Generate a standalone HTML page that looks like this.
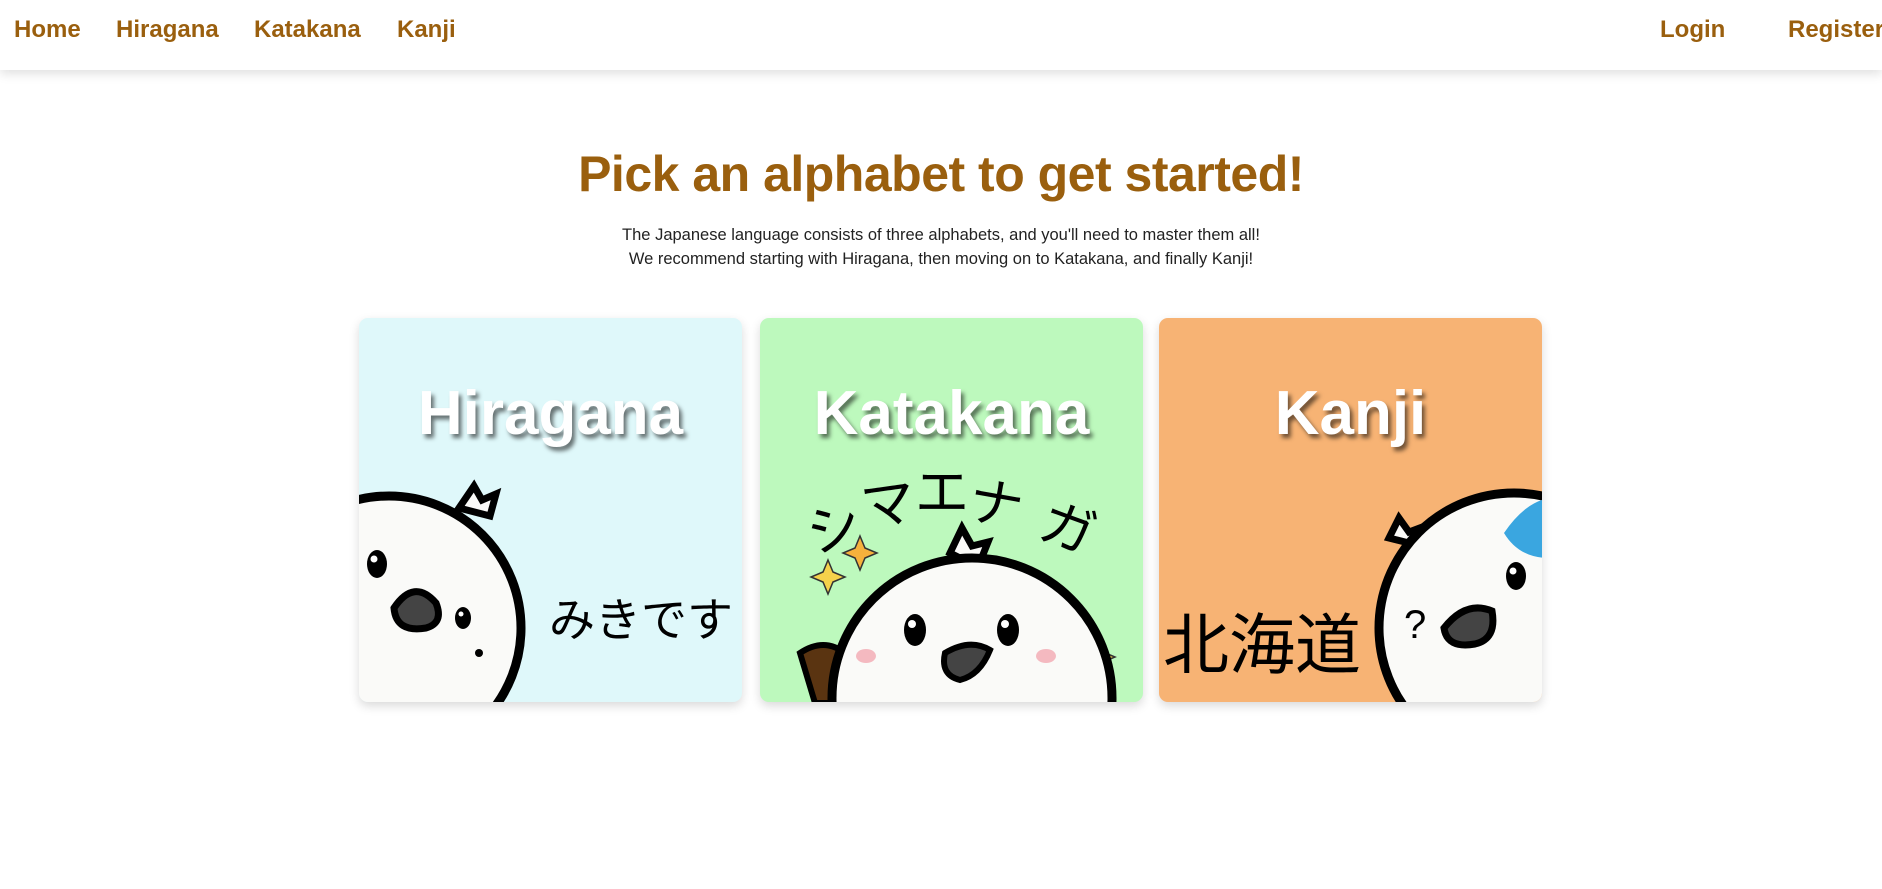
<!DOCTYPE html>
<html><head><meta charset="utf-8"><style>
*{margin:0;padding:0;box-sizing:border-box}
body{width:1882px;height:889px;background:#fff;font-family:"Liberation Sans","Noto Sans CJK JP",sans-serif;overflow:hidden;position:relative}
nav{position:absolute;left:0;top:0;width:1882px;height:70px;background:#fff;box-shadow:0 4px 10px rgba(0,0,0,.12);z-index:2}
nav a{position:absolute;top:16px;font-size:24px;font-weight:bold;color:#9a5f0e;text-decoration:none;white-space:nowrap}
h1{position:absolute;top:145px;width:100%;text-align:center;font-size:50px;color:#9a5f0e;font-weight:bold;letter-spacing:-0.5px}
.sub{position:absolute;top:223px;width:100%;text-align:center;font-size:16.5px;line-height:24px;color:#222}
.card{position:absolute;top:318px;width:383px;height:384px;border-radius:9px;overflow:hidden;box-shadow:0 4px 10px rgba(0,0,0,.15)}
.card svg{position:absolute;left:0;top:0}
.t{position:absolute;top:60px;width:100%;text-align:center;font-size:62px;color:#fff;font-weight:bold;text-shadow:3px 4px 4px rgba(0,0,0,.55)}
</style></head><body>
<nav>
<a style="left:14px">Home</a><a style="left:116px">Hiragana</a><a style="left:254px">Katakana</a><a style="left:397px">Kanji</a>
<a style="left:1660px">Login</a><a style="left:1788px">Register</a>
</nav>
<h1>Pick an alphabet to get started!</h1>
<div class="sub">The Japanese language consists of three alphabets, and you'll need to master them all!<br>We recommend starting with Hiragana, then moving on to Katakana, and finally Kanji!</div>

<div class="card" style="left:359px;background:#dff8fa">
<svg width="383" height="384">
<path d="M100 190 l15 -22 l8 14 l14 -6 l-6 22z" fill="#fafaf8" stroke="#000" stroke-width="7"/>
<circle cx="30" cy="310" r="132" fill="#fafaf8" stroke="#000" stroke-width="9"/>
<ellipse cx="18" cy="246" rx="10" ry="14" fill="#000"/><circle cx="15" cy="241" r="3.5" fill="#fff"/>
<path d="M35 290 q20 -30 42 -5 q8 20 -10 25 q-30 5 -32 -20z" fill="#444" stroke="#000" stroke-width="7"/>
<ellipse cx="104" cy="300" rx="8" ry="11" fill="#000"/><circle cx="102" cy="296" r="2.5" fill="#fff"/>
<circle cx="120" cy="335" r="4" fill="#000"/>
<text x="190" y="318" font-size="46" font-family="Noto Sans CJK JP,sans-serif">みきです</text>
</svg>
<div class="t">Hiragana</div>
</div>

<div class="card" style="left:760px;background:#bdf9bd">
<svg width="383" height="384">
<g font-size="54" font-family="Noto Sans CJK JP,sans-serif">
<text x="47" y="229" transform="rotate(-18 74 210)">シ</text>
<text x="101" y="205" transform="rotate(-8 128 186)">マ</text>
<text x="155" y="193">エ</text>
<text x="209" y="205" transform="rotate(10 236 186)">ナ</text>
<text x="281" y="229" transform="rotate(20 308 210)">ガ</text>
</g>
<path d="M100 218 l5 12 l12 5 l-12 5 l-5 12 l-5 -12 l-12 -5 l12 -5z" fill="#f6b13c" stroke="#333" stroke-width="1.5"/>
<path d="M68 242 l5 12 l12 5 l-12 5 l-5 12 l-5 -12 l-12 -5 l12 -5z" fill="#f5d24b" stroke="#333" stroke-width="1.5"/>
<path d="M312 300 l5 12 l12 5 l-12 5 l-5 12 l-5 -12 l-12 -5 l12 -5z" fill="#f6b13c" stroke="#333" stroke-width="1.5"/>
<path d="M338 322 l5 12 l12 5 l-12 5 l-5 12 l-5 -12 l-12 -5 l12 -5z" fill="#f5d24b" stroke="#333" stroke-width="1.5"/>
<path d="M40 335 q30 -20 55 10 l-10 40 h-30z" fill="#5a3411" stroke="#000" stroke-width="6"/>
<path d="M190 235 l12 -25 l10 18 l16 -4 l-10 25z" fill="#fafaf8" stroke="#000" stroke-width="7"/>
<circle cx="212" cy="380" r="140" fill="#fafaf8" stroke="#000" stroke-width="9"/>
<ellipse cx="155" cy="312" rx="11" ry="16" fill="#000"/><circle cx="152" cy="306" r="4" fill="#fff"/>
<ellipse cx="248" cy="312" rx="11" ry="16" fill="#000"/><circle cx="245" cy="306" r="4" fill="#fff"/>
<path d="M185 335 q25 -15 45 -3 q-10 25 -30 30 q-20 -5 -15 -27z" fill="#444" stroke="#000" stroke-width="6"/>
<ellipse cx="106" cy="338" rx="10" ry="7" fill="#f4b9c0"/><ellipse cx="286" cy="338" rx="10" ry="7" fill="#f4b9c0"/>
</svg>
<div class="t">Katakana</div>
</div>

<div class="card" style="left:1159px;background:#f7b374">
<svg width="383" height="384">
<text x="4" y="350" font-size="66" font-family="Noto Sans CJK JP,sans-serif">北海道</text>
<path d="M230 220 l10 -20 l10 14 l16 -6 l-4 20z" fill="#fafaf8" stroke="#000" stroke-width="7"/>
<circle cx="355" cy="310" r="135" fill="#fafaf8" stroke="#000" stroke-width="9"/>
<path d="M345 215 q20 -30 45 -35 v60 q-30 0 -45 -25z" fill="#3aa6e0"/>
<ellipse cx="357" cy="258" rx="10" ry="14" fill="#000"/><circle cx="354" cy="253" r="3.5" fill="#fff"/>
<path d="M285 310 q22 -28 48 -17 q5 28 -17 33 q-28 5 -31 -16z" fill="#444" stroke="#000" stroke-width="7"/>
<text x="245" y="320" font-size="40" font-family="Liberation Sans,sans-serif">?</text>
</svg>
<div class="t">Kanji</div>
</div>
</body></html>
